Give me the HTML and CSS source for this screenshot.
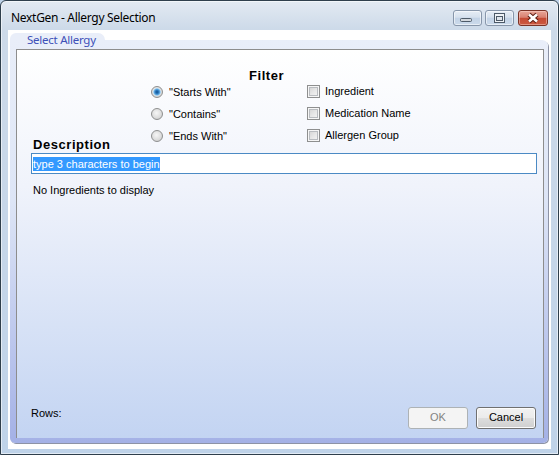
FILE: index.html
```html
<!DOCTYPE html>
<html>
<head>
<meta charset="utf-8">
<title>NextGen - Allergy Selection</title>
<link rel="stylesheet" href="styles.css">
</head>
<body>
<div class="window">
  <div class="titlebar">
    <div class="title">NextGen - Allergy Selection</div>
    <div class="caption-buttons">
      <div class="cbtn min">
        <svg viewBox="0 0 29 16" width="29" height="16"><rect x="7.5" y="8.5" width="11" height="3" rx="1" fill="#d3d8de" stroke="#4d5a68"/></svg>
      </div>
      <div class="cbtn max">
        <svg viewBox="0 0 29 16" width="29" height="16"><rect x="9.5" y="3.5" width="10" height="9" fill="#eef2f6" stroke="#4d5a68"/><rect x="11.5" y="6.5" width="6" height="4" fill="#dfe5ec" stroke="#4d5a68"/></svg>
      </div>
      <div class="cbtn close">
        <svg viewBox="0 0 30 16" width="30" height="16"><path d="M11 4.5 L19 11.5 M19 4.5 L11 11.5" stroke="#5b1c12" stroke-width="4.6" fill="none"/><path d="M11 4.5 L19 11.5 M19 4.5 L11 11.5" stroke="#ffffff" stroke-width="2.6" fill="none"/></svg>
      </div>
    </div>
  </div>
  <div class="client">
    <div class="tab">Select Allergy</div>
    <div class="tabbody">
      <div class="panel">
        <div class="filter-title">Filter</div>
        <div class="filter-grid">
          <div class="radios">
            <div class="opt"><span class="radio checked"></span>"Starts With"</div>
            <div class="opt"><span class="radio"></span>"Contains"</div>
            <div class="opt"><span class="radio"></span>"Ends With"</div>
          </div>
          <div class="checks">
            <div class="opt"><span class="check"></span>Ingredient</div>
            <div class="opt"><span class="check"></span>Medication Name</div>
            <div class="opt"><span class="check"></span>Allergen Group</div>
          </div>
        </div>
        <div class="desc-title">Description</div>
        <div class="textbox"><span class="sel">type 3 characters to begin</span></div>
        <div class="empty">No Ingredients to display</div>
        <div class="footer">
          <div class="rows">Rows:</div>
          <div class="buttons">
            <button class="btn" disabled>OK</button>
            <button class="btn primary">Cancel</button>
          </div>
        </div>
      </div>
    </div>
  </div>
</div>
</body>
</html>
```
FILE: styles.css
```css
html, body {
  margin: 0;
  padding: 0;
  background: #bed2e8;
}

.window {
  width: 559px;
  height: 455px;
  box-sizing: border-box;
  border: 1px solid #2f3f4c;
  border-radius: 6px 6px 0 0;
  overflow: hidden;
  background: linear-gradient(#e3eaf2 0, #cddae9 28px, #bfd3e9 100%);
  box-shadow: inset 0 0 0 1px rgba(255, 255, 255, 0.55);
  display: flex;
  flex-direction: column;
  font-family: "Liberation Sans", Arial, sans-serif;
  font-size: 11px;
  color: #000;
}

.titlebar {
  height: 29px;
  box-sizing: border-box;
  padding: 9px 10px 0 10px;
  display: flex;
  justify-content: space-between;
  align-items: flex-start;
  flex: none;
}

.title {
  font-family: "Noto Sans", "Open Sans", sans-serif;
  font-size: 12px;
  letter-spacing: -0.3px;
  line-height: 16px;
  color: #000;
}

.caption-buttons {
  display: flex;
}

.cbtn {
  height: 16px;
  width: 29px;
  box-sizing: border-box;
  border: 1px solid #8796aa;
  border-radius: 3px;
  background: linear-gradient(#e6edf5 0%, #d6e1ee 45%, #c3d3e6 50%, #cbdaeb 100%);
  box-shadow: inset 0 0 0 1px rgba(255, 255, 255, 0.55);
  display: flex;
  align-items: center;
  justify-content: center;
  overflow: hidden;
}

.cbtn svg {
  display: block;
  flex: none;
}

.cbtn.min {
  margin-right: 3px;
}

.cbtn.max {
  margin-right: 4px;
}

.cbtn.close {
  width: 30px;
  border-color: #7a3226;
  background: linear-gradient(#e8a699 0%, #d98171 45%, #c54b35 52%, #cc5a42 100%);
  box-shadow: inset 0 0 0 1px rgba(255, 220, 210, 0.45);
}

.client {
  flex: 1;
  margin: 0 7px 5px 7px;
  background: #ffffff;
  padding: 3px 3px 6px 2px;
  display: flex;
  flex-direction: column;
  min-height: 0;
}

.tab {
  position: relative;
  z-index: 1;
  flex: none;
  width: 95px;
  height: 7px;
  box-sizing: border-box;
  padding-left: 17px;
  background: #e9eef9;
  border-radius: 6px 7px 0 0;
  font-family: "Noto Sans", "Open Sans", sans-serif;
  font-size: 11.5px;
  letter-spacing: -0.25px;
  line-height: 14px;
  color: #3d50b8;
  white-space: nowrap;
}

.tabbody {
  flex: 1;
  min-height: 0;
  padding: 9px 4px 5px 6px;
  border-radius: 0 6px 5px 5px;
  background: linear-gradient(#e9eef9 0%, #dde5f6 40%, #a4b1e6 100%);
  box-shadow: 1px 1px 0 #8d93a6;
  display: flex;
}

.panel {
  flex: 1;
  border: 1px solid #8d8d8d;
  border-bottom: none;
  background: linear-gradient(#ffffff 0%, #f0f3fb 35%, #c3d4f2 100%);
  padding-top: 20px;
  display: flex;
  flex-direction: column;
}

.filter-title {
  padding-left: 232px;
  font-size: 13px;
  font-weight: bold;
  letter-spacing: 0.55px;
  line-height: 12px;
}

.filter-grid {
  display: flex;
  padding-left: 134px;
}

.radios {
  width: 156px;
  display: flex;
  flex-direction: column;
  gap: 2px;
}

.checks {
  margin-top: -1px;
  display: flex;
  flex-direction: column;
  gap: 2px;
}

.opt {
  height: 20px;
  display: flex;
  align-items: center;
  gap: 6px;
  line-height: 13px;
  white-space: nowrap;
}

.checks .opt {
  gap: 5px;
}

.radio {
  flex: none;
  width: 12px;
  height: 12px;
  box-sizing: border-box;
  border-radius: 50%;
  border: 1px solid #8e8f8f;
  background: radial-gradient(circle at 45% 40%, #f6f6f6 0, #dedede 55%, #c4c4c4 100%);
}

.radio.checked {
  background:
    radial-gradient(circle at 50% 50%, #0f4f8c 0, #2a76bb 1.6px, #5fa8de 2.8px, #a9d4f3 3.6px, rgba(255, 255, 255, 0) 4px),
    radial-gradient(circle at 45% 40%, #f6f6f6 0, #dedede 55%, #c4c4c4 100%);
}

.check {
  flex: none;
  width: 13px;
  height: 13px;
  box-sizing: border-box;
  border: 1px solid #8e8f8f;
  background: linear-gradient(135deg, #cfcfcf 0%, #e6e6e6 50%, #f8f8f8 100%);
  box-shadow: inset 0 0 0 1px #f6f6f6, inset 0 0 0 2px #b9bcc0;
}

.desc-title {
  margin-top: -8px;
  padding-left: 16px;
  font-size: 13px;
  font-weight: bold;
  letter-spacing: 0.55px;
  line-height: 14px;
}

.textbox {
  margin: 1px 6px 0 14px;
  height: 21px;
  box-sizing: border-box;
  border: 1px solid #4b8ac4;
  background: #ffffff;
  padding: 0 1px;
  display: flex;
  align-items: center;
}

.sel {
  background: #3399ff;
  color: #ffffff;
  line-height: 14px;
  white-space: nowrap;
}

.empty {
  margin-top: 10px;
  padding-left: 16px;
  line-height: 13px;
}

.footer {
  margin-top: auto;
  padding: 0 7px 9px 14px;
  display: flex;
  justify-content: space-between;
  align-items: flex-start;
}

.rows {
  line-height: 13px;
}

.buttons {
  display: flex;
  gap: 8px;
}

.btn {
  width: 60px;
  height: 22px;
  box-sizing: border-box;
  margin: 0;
  padding: 0 0 1px 0;
  font-family: "Liberation Sans", Arial, sans-serif;
  font-size: 11px;
  line-height: 13px;
  border-radius: 3px;
  border: 1px solid #707070;
  color: #000;
  background: linear-gradient(#f2f2f2 0%, #ebebeb 48%, #dddddd 52%, #cfcfcf 100%);
  box-shadow: inset 0 0 0 1px #fcfcfc;
}

.btn:disabled {
  border-color: #adb2b5;
  background: #f4f4f4;
  color: #838383;
  box-shadow: none;
}
```
